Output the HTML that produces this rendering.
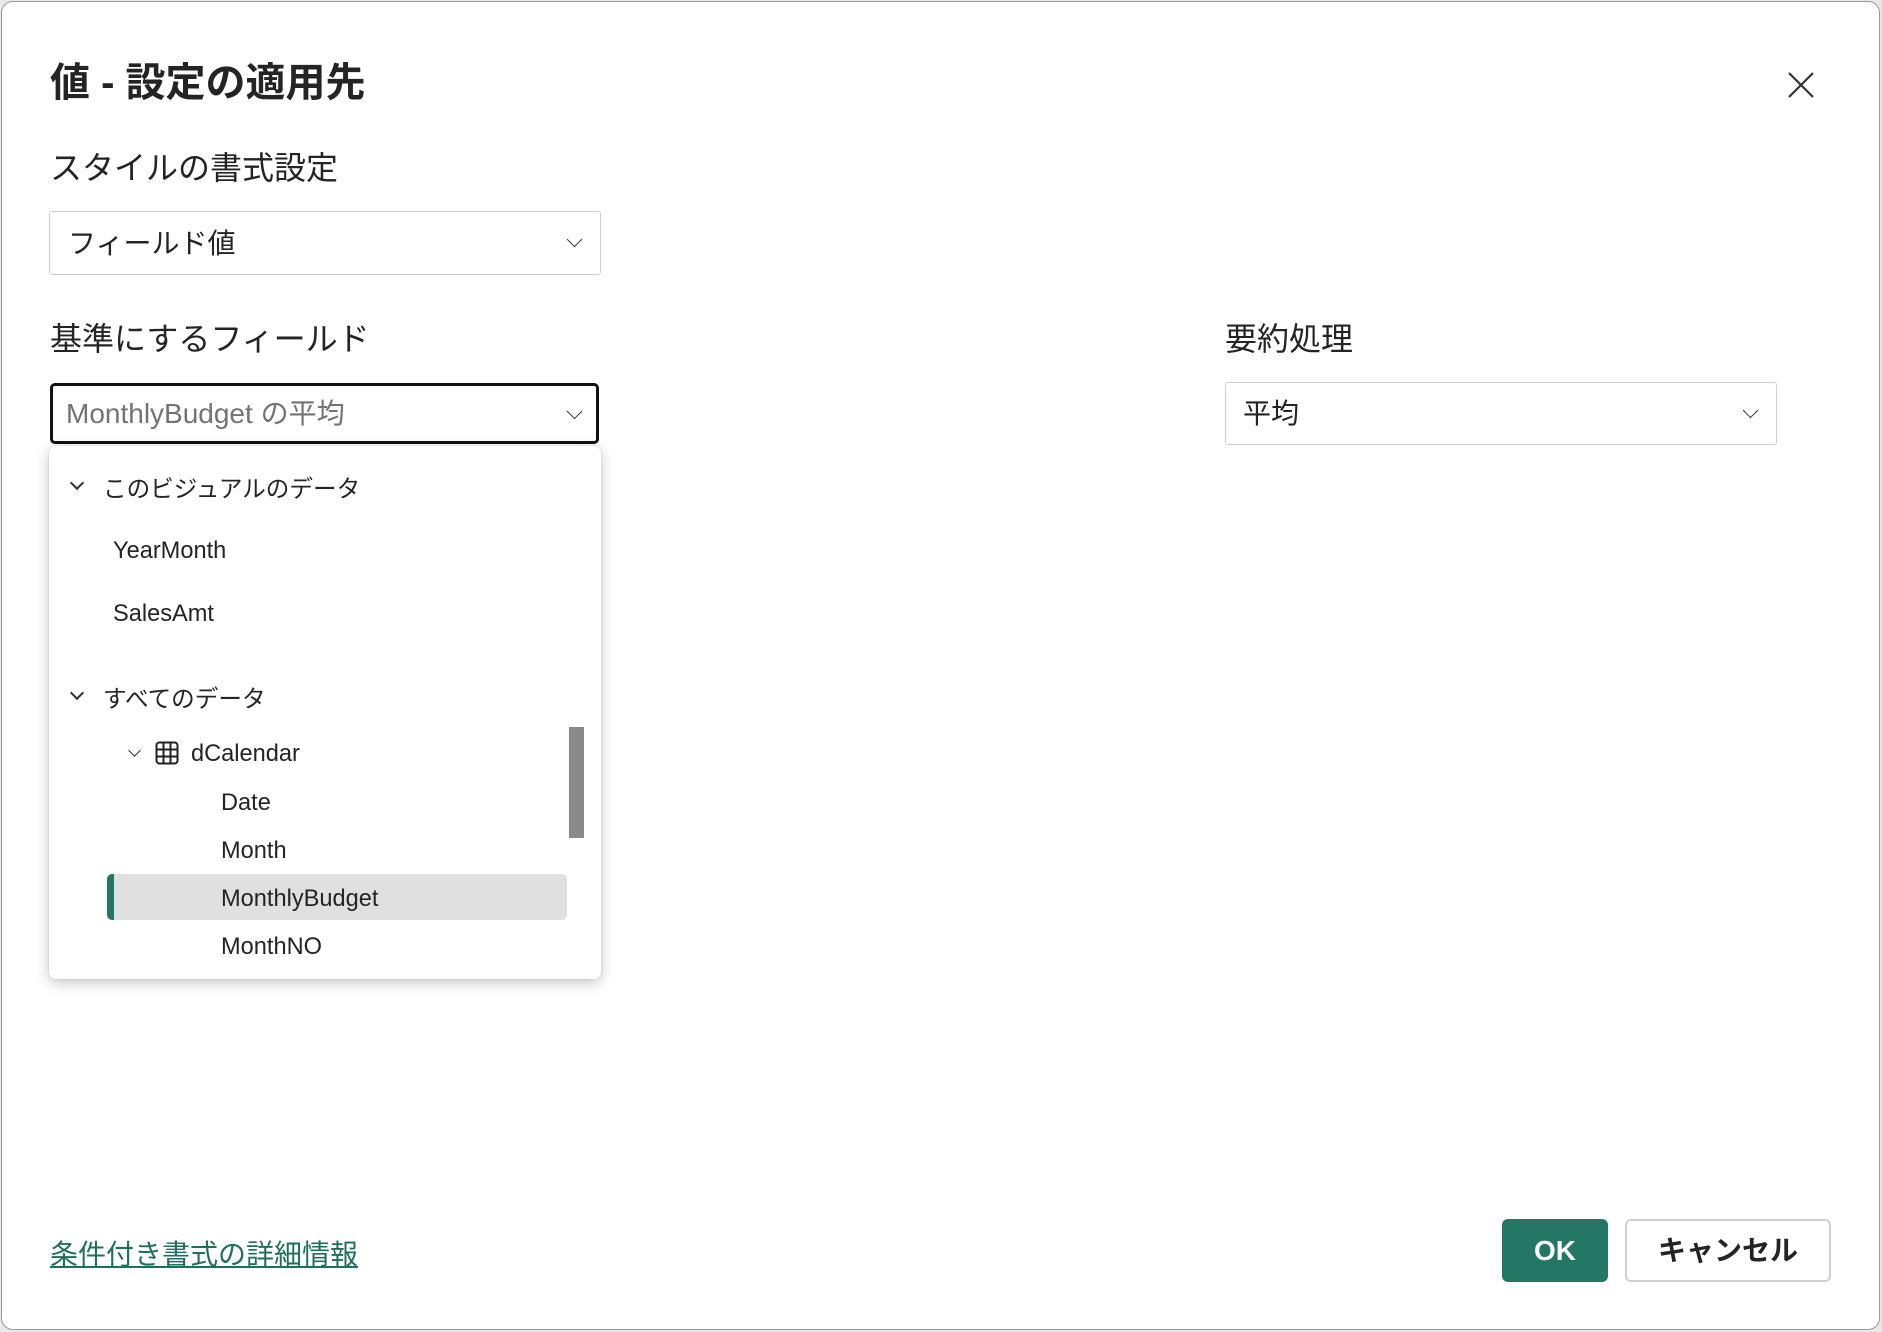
<!DOCTYPE html>
<html><head><meta charset="utf-8"><style>
*{box-sizing:border-box;margin:0;padding:0}
body{width:1882px;height:1332px;background:#e8e8e8;position:relative;overflow:hidden;font-family:"Liberation Sans","Noto Sans CJK JP",sans-serif;color:#242424}
.dlg{position:absolute;left:1px;top:1px;width:1879px;height:1329px;background:#fff;border:1px solid #9a9a9a;border-radius:12px}
.a{position:absolute;white-space:nowrap}
.dd{position:absolute;border:1.5px solid #cfcfcf;border-radius:3px;background:#fff}
.chev{position:absolute;width:11px;height:11px;border-right:1.6px solid #333;border-bottom:1.6px solid #333;transform:rotate(45deg)}
.item{position:absolute;font-size:23.6px;white-space:nowrap;color:#242424}
</style></head><body>
<div class="dlg"></div>
<div class="a" style="left:50px;top:59px;font-size:40px;font-weight:bold;line-height:48px">値 - 設定の適用先</div>
<svg class="a" style="left:1788px;top:72px" width="26" height="26" viewBox="0 0 26 26"><path d="M1 1L25 25M25 1L1 25" stroke="#333" stroke-width="2.2"/></svg>
<div class="a" style="left:50px;top:148px;font-size:32px;line-height:40px">スタイルの書式設定</div>
<div class="dd" style="left:49px;top:211px;width:552px;height:64px"></div>
<div class="a" style="left:68px;top:226px;font-size:28px;line-height:36px">フィールド値</div>
<div class="chev" style="left:569px;top:234px"></div>
<div class="a" style="left:50px;top:319px;font-size:32px;line-height:40px">基準にするフィールド</div>
<div class="a" style="left:50px;top:383px;width:549px;height:61px;border:3px solid #111;border-radius:5px;background:#fff"></div>
<div class="a" style="left:66px;top:396px;font-size:28px;line-height:36px;color:#737373">MonthlyBudget の平均</div>
<div class="chev" style="left:569px;top:406px"></div>
<div class="a" style="left:1225px;top:319px;font-size:32px;line-height:40px">要約処理</div>
<div class="dd" style="left:1225px;top:382px;width:552px;height:63px"></div>
<div class="a" style="left:1243px;top:396px;font-size:28px;line-height:36px">平均</div>
<div class="chev" style="left:1745px;top:405px"></div>
<div class="a" style="left:49px;top:446px;width:552px;height:533px;background:#fff;border-radius:7px;box-shadow:0 4px 14px rgba(0,0,0,.22),0 0 2px rgba(0,0,0,.15)"></div>
<div class="chev" style="left:72px;top:478px;width:10px;height:10px;border-width:2px"></div>
<div class="item" style="left:103px;top:470px">このビジュアルのデータ</div>
<div class="item" style="left:113px;top:538px">YearMonth</div>
<div class="item" style="left:113px;top:601px">SalesAmt</div>
<div class="chev" style="left:72px;top:688px;width:10px;height:10px;border-width:2px"></div>
<div class="item" style="left:103px;top:680px">すべてのデータ</div>
<div class="chev" style="left:130px;top:746px;width:9px;height:9px;border-width:1.5px"></div>
<svg class="a" style="left:155px;top:741px" width="24" height="24" viewBox="0 0 24 24"><rect x="1.5" y="1.5" width="21" height="21" rx="3" fill="none" stroke="#222" stroke-width="2"/><path d="M1.5 8.5H22.5M1.5 15.5H22.5M8.5 1.5V22.5M15.5 1.5V22.5" stroke="#222" stroke-width="2"/></svg>
<div class="item" style="left:191px;top:741px">dCalendar</div>
<div class="item" style="left:221px;top:790px">Date</div>
<div class="item" style="left:221px;top:838px">Month</div>
<div class="a" style="left:107px;top:874px;width:460px;height:46px;background:#e0e0e0;border-radius:5px;overflow:hidden"><div style="width:7px;height:100%;background:#237764"></div></div>
<div class="item" style="left:221px;top:886px">MonthlyBudget</div>
<div class="item" style="left:221px;top:934px">MonthNO</div>
<div class="a" style="left:569px;top:727px;width:15px;height:111px;background:#8a8a8a"></div>
<div class="a" style="left:50px;top:1237px;font-size:28px;line-height:36px;color:#1f6f5f;text-decoration:underline">条件付き書式の詳細情報</div>
<div class="a" style="left:1502px;top:1219px;width:106px;height:63px;background:#237764;border-radius:6px;color:#fff;font-weight:bold;font-size:28px;text-align:center;line-height:63px">OK</div>
<div class="a" style="left:1625px;top:1219px;width:206px;height:63px;border:2px solid #d0d0d0;border-radius:6px;font-weight:bold;font-size:28px;text-align:center;line-height:59px">キャンセル</div>
</body></html>
